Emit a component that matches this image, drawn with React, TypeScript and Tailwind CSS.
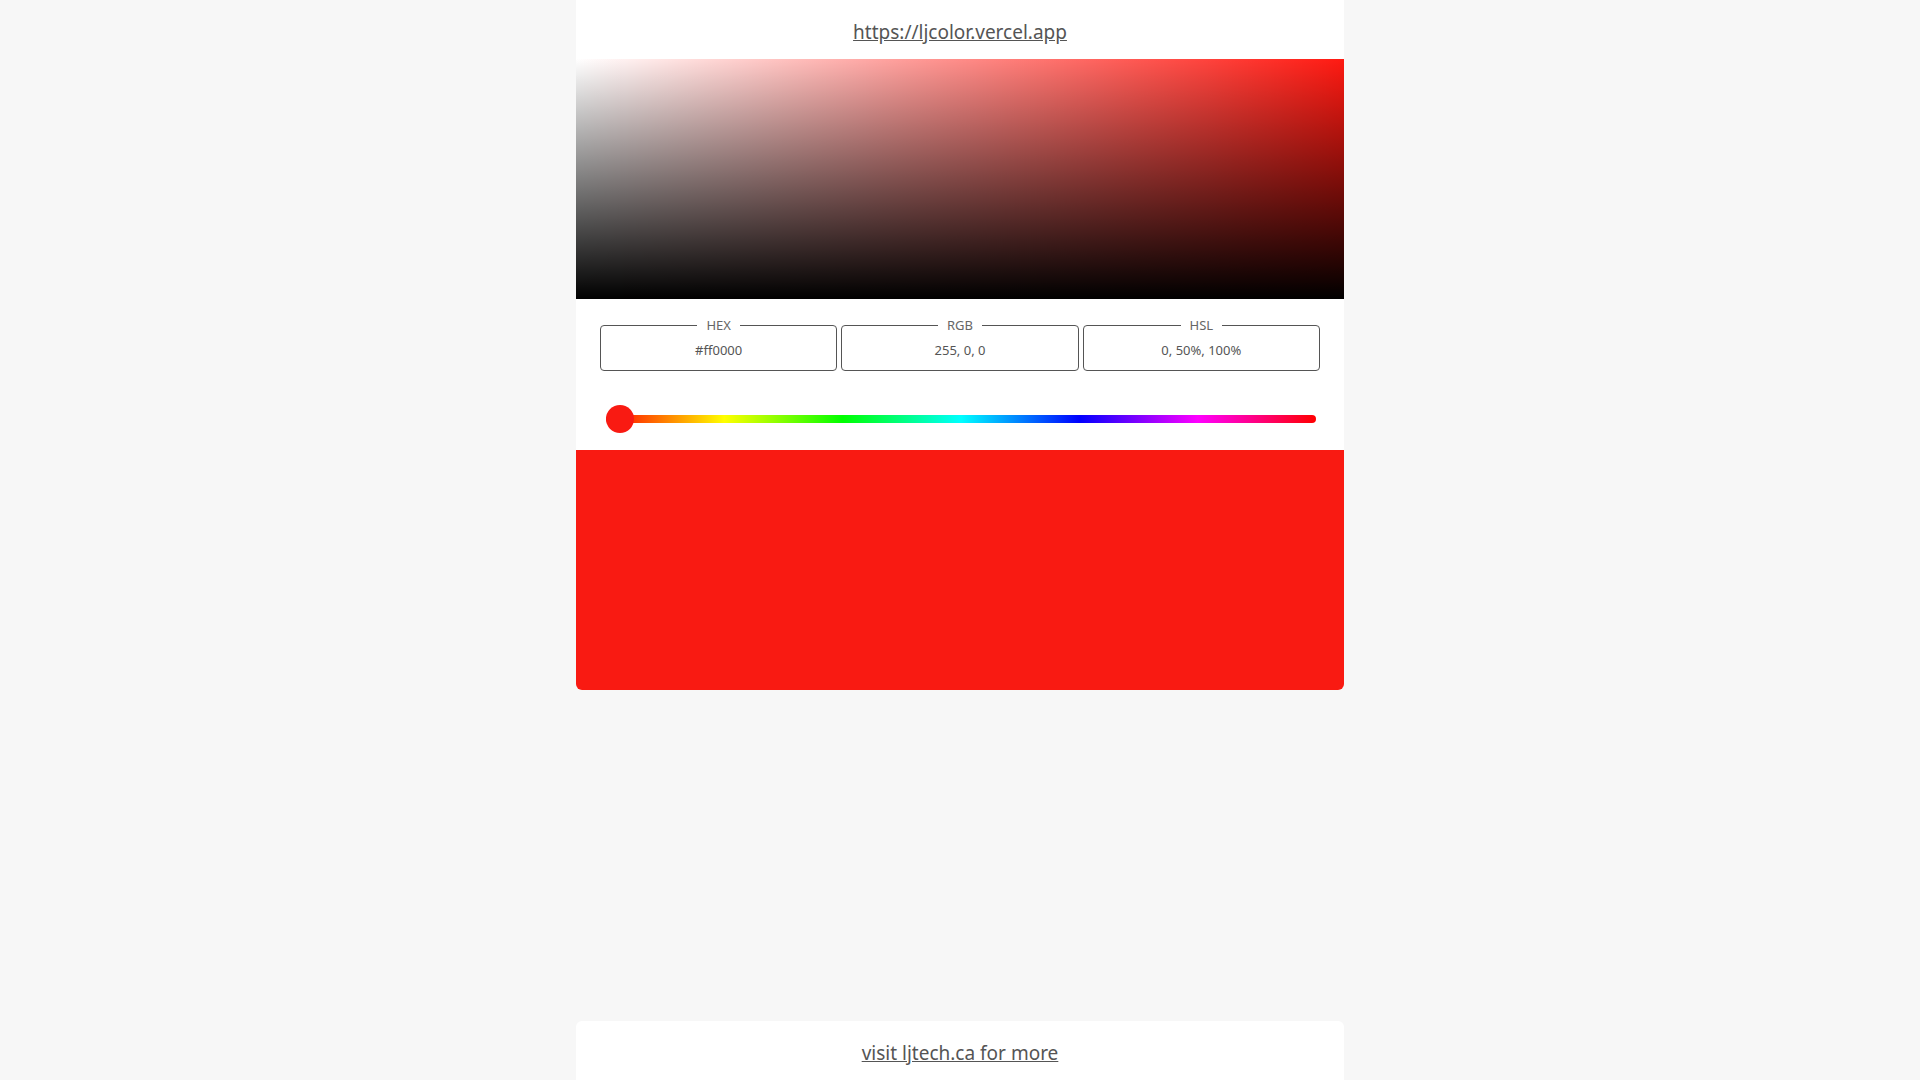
const HUE =
  "linear-gradient(to right, #ff0000 0%, #ffff00 16.66%, #00ff00 33.33%, #00ffff 50%, #0000ff 66.66%, #ff00ff 83.33%, #ff0000 100%)";

function Field({ label, value }: { label: string; value: string }) {
  return (
    <fieldset className="flex-1 rounded-[4px] border border-[#555] px-2 pb-[11px] pt-[7px] text-center">
      <legend className="mx-auto px-[9px] text-[13px] leading-[18px] text-[#666]">{label}</legend>
      <div className="text-[13px] leading-[18px] text-[#555]">{value}</div>
    </fieldset>
  );
}

export default function App() {
  return (
    <div className="flex min-h-screen flex-col items-center bg-[#f7f7f7] font-['Noto_Sans',sans-serif] text-[#555]">
      <div className="w-[768px] rounded-b-md bg-white">
        <div className="flex h-[59px] items-center justify-center pt-[6px]">
          <a href="#" className="text-[19px] text-[#555] underline">
            https://ljcolor.vercel.app
          </a>
        </div>

        {/* saturation / value square */}
        <div className="relative h-[240px] bg-[#ff1a12]">
          <div className="absolute inset-0 bg-gradient-to-r from-white to-transparent" />
          <div className="absolute inset-0 bg-gradient-to-b from-transparent to-black" />
        </div>

        <div className="px-6 pt-[17px]">
          <div className="flex gap-[4px]">
            <Field label="HEX" value="#ff0000" />
            <Field label="RGB" value="255, 0, 0" />
            <Field label="HSL" value="0, 50%, 100%" />
          </div>
        </div>

        <div className="pl-[30px] pr-[28px] pt-[34px] pb-[17px]">
          <div className="relative h-[28px]">
            <div
              className="absolute left-0 right-0 top-[10px] h-[8px] rounded-full"
              style={{ background: HUE }}
            />
            <div className="absolute left-0 top-0 h-[28px] w-[28px] rounded-full bg-[#f91a12]" />
          </div>
        </div>

        <div className="h-[240px] rounded-b-md bg-[#f91a12]" />
      </div>

      <div className="mt-auto flex h-[59px] w-[768px] items-center justify-center rounded-t-md bg-white pt-[5px]">
        <a href="#" className="text-[19px] text-[#555] underline">
          visit ljtech.ca for more
        </a>
      </div>
    </div>
  );
}
